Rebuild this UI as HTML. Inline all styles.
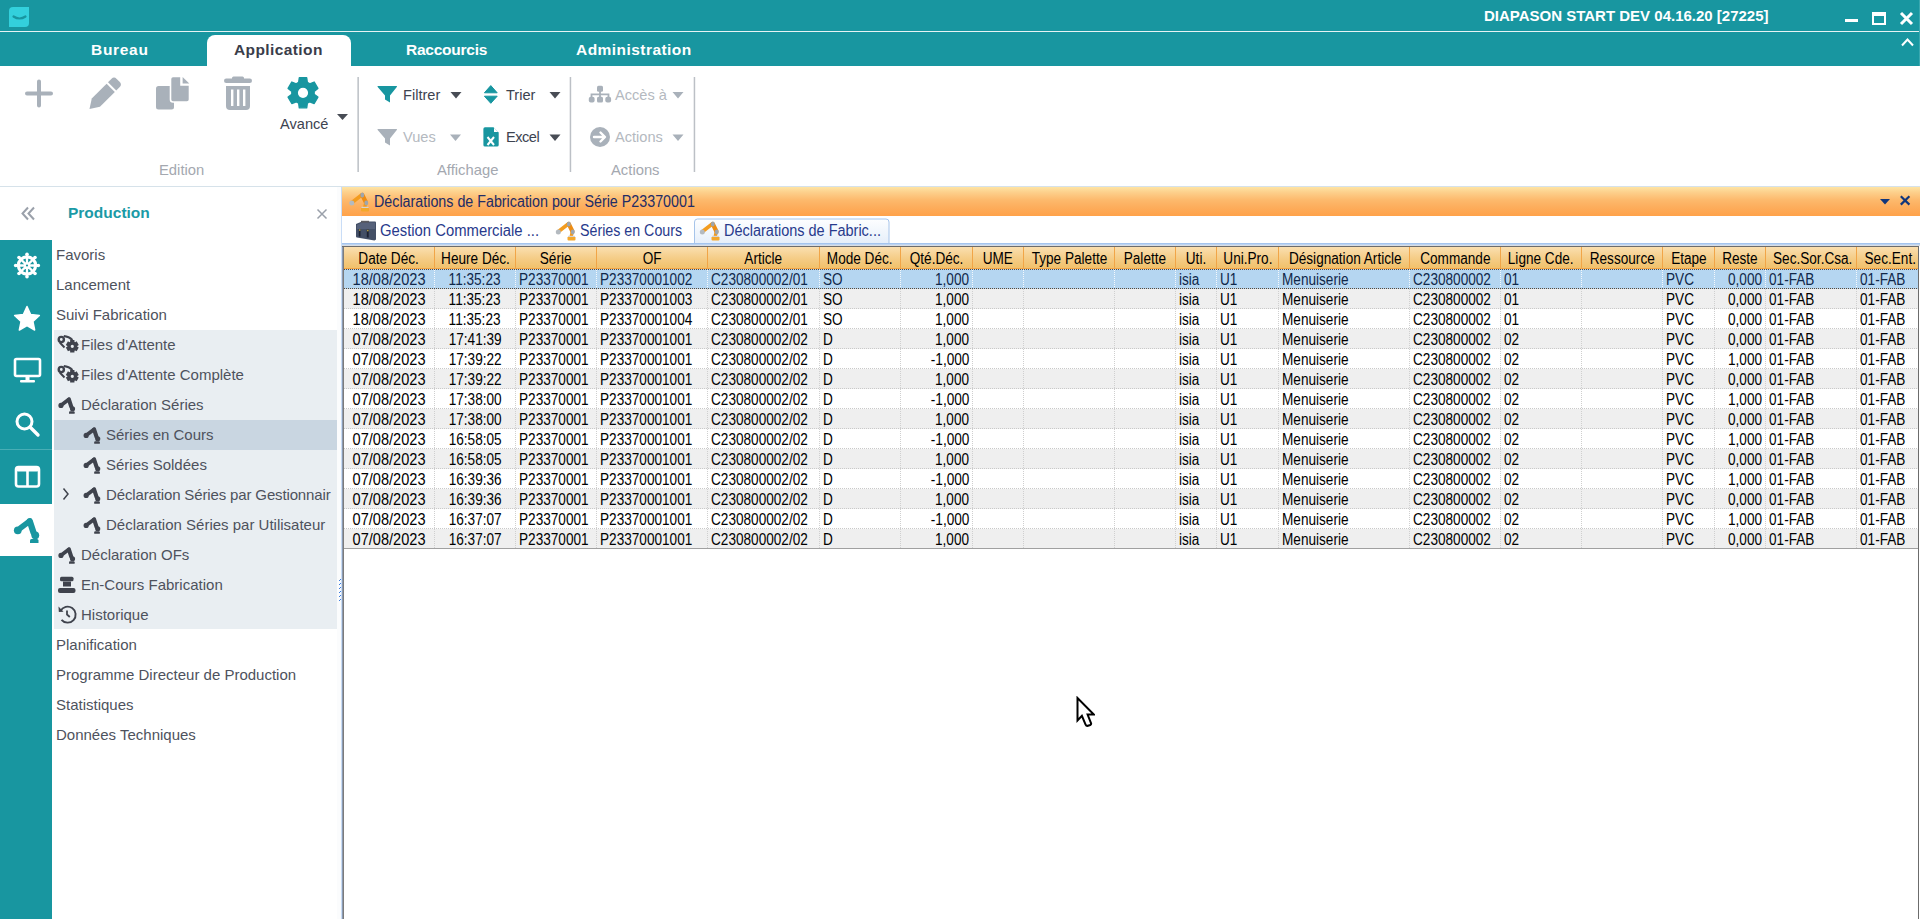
<!DOCTYPE html><html><head><meta charset="utf-8"><style>
*{box-sizing:border-box;margin:0;padding:0}
html,body{width:1920px;height:919px;overflow:hidden;background:#fff;font-family:"Liberation Sans",sans-serif;position:relative}
.a{position:absolute}
.t{position:absolute;white-space:nowrap;line-height:1}
.rtab{position:absolute;top:42px;font-weight:bold;font-size:15.5px;color:#fff;white-space:nowrap;line-height:1}
.glabel{position:absolute;top:163px;font-size:14.8px;color:#a4a8b0;white-space:nowrap;line-height:1}
.rsep{position:absolute;top:77px;width:2px;height:95px;background:#c8ccd0}
.rt{position:absolute;font-size:14.6px;color:#3d4350;white-space:nowrap;line-height:1}
.rt.dis{color:#b4b9c0}
.tr{position:absolute;font-size:15px;color:#4e525d;white-space:nowrap;line-height:1}
.grid{position:absolute;left:343px;top:246px;width:1576px;height:303px}
.hc{position:absolute;top:0;height:23px;font-size:14px;color:#000;text-align:center;line-height:23px;white-space:nowrap}
.c{position:absolute;font-size:16px;white-space:nowrap;line-height:20px;height:20px}
</style></head><body>
<div class="a" style="left:0;top:0;width:1920px;height:66px;background:#1896a0"></div>
<div class="a" style="left:0;top:31px;width:1920px;height:1px;background:#e6f3f4"></div>
<div class="a" style="left:1919px;top:0;width:1px;height:66px;background:#3aa8b0"></div>
<svg class="a" style="left:0;top:0" width="40" height="31" viewBox="0 0 40 31"><path d="M13,7 H29 V23 Q29,27 25,27 H9 V11 Q9,7 13,7Z" fill="#33d0dc"/><path d="M13.5,16.5 Q19.5,20.5 25.5,16.5" stroke="#1896a0" stroke-width="2.2" fill="none" stroke-linecap="round"/></svg>
<div class="t" style="left:1484px;top:8px;font-size:15px;font-weight:bold;color:#fff">DIAPASON START DEV 04.16.20 [27225]</div>
<svg class="a" style="left:1840px;top:8px" width="80" height="45" viewBox="1840 8 80 45"><rect x="1845" y="19" width="13" height="3" fill="#fff"/><rect x="1873" y="13" width="12" height="11" fill="none" stroke="#fff" stroke-width="2"/><rect x="1872" y="12" width="14" height="4" fill="#fff"/><path d="M1901,13 L1912,24 M1912,13 L1901,24" stroke="#fff" stroke-width="3"/><path d="M1902,45.5 L1907.5,39.5 L1913,45.5" stroke="#fff" stroke-width="2" fill="none"/></svg>
<div class="a" style="left:207px;top:35px;width:144px;height:31px;background:#fff;border-radius:8px 8px 0 0"></div>
<div class="rtab" style="left:91px;letter-spacing:0.7px">Bureau</div>
<div class="rtab" style="left:234px;color:#3a3d4a;letter-spacing:0.4px">Application</div>
<div class="rtab" style="left:406px;letter-spacing:-0.25px">Raccourcis</div>
<div class="rtab" style="left:576px;letter-spacing:0.45px">Administration</div>
<div class="a" style="left:0;top:186px;width:1920px;height:1px;background:#d6e2ea"></div>
<svg class="a" style="left:0;top:66px" width="720" height="120" viewBox="0 66 720 120"><path d="M27,93.5 H51 M39,81.5 V105.5" stroke="#a9b1ba" stroke-width="4" stroke-linecap="round"/><g transform="translate(89.5,109) rotate(-45)"><path d="M0,0 L9,-5.8 H30 V5.8 H9 Z" fill="#a9b1ba"/><path d="M32,-5.8 H37 Q40.5,-5.8 40.5,-2 V2 Q40.5,5.8 37,5.8 H32Z" fill="#a9b1ba"/></g><rect x="156" y="86" width="18" height="23.5" rx="2.5" fill="#a9b1ba"/><path d="M173,76.5 H181 V85 H189.5 V99.5 Q189.5,102 187,102 H173 Q170.5,102 170.5,99.5 V79 Q170.5,76.5 173,76.5Z" fill="#a9b1ba" stroke="#fff" stroke-width="1.6"/><path d="M182.6,77 L189.3,83.5 H182.6Z" fill="#a9b1ba"/><rect x="224" y="78.5" width="28" height="4.5" rx="2.2" fill="#a9b1ba"/><rect x="232" y="76.5" width="12" height="4" rx="1.5" fill="#a9b1ba"/><path d="M226,86 H250 V106 Q250,110 246,110 H230 Q226,110 226,106Z" fill="#a9b1ba"/><rect x="231" y="89.5" width="2.4" height="16.5" fill="#fff"/><rect x="237" y="89.5" width="2.4" height="16.5" fill="#fff"/><rect x="243" y="89.5" width="2.4" height="16.5" fill="#fff"/><path d="M298.64,82.48 L299.32,77.74 L306.68,77.74 L307.36,82.48 A11.20,11.20 0 0 1 309.75,83.86 L314.20,82.08 L317.88,88.46 L314.11,91.42 A11.20,11.20 0 0 1 314.11,94.18 L317.88,97.14 L314.20,103.52 L309.75,101.74 A11.20,11.20 0 0 1 307.36,103.12 L306.68,107.86 L299.32,107.86 L298.64,103.12 A11.20,11.20 0 0 1 296.25,101.74 L291.80,103.52 L288.12,97.14 L291.89,94.18 A11.20,11.20 0 0 1 291.89,91.42 L288.12,88.46 L291.80,82.08 L296.25,83.86 A11.20,11.20 0 0 1 298.64,82.48Z M297.20,92.80 a5.80,5.80 0 1 0 11.60,0 a5.80,5.80 0 1 0 -11.60,0Z" fill="#1896a0" fill-rule="evenodd" stroke="#1896a0" stroke-width="1.4" stroke-linejoin="round"/><path d="M337,114 H348 L342.5,120Z" fill="#484c55"/><rect x="357.4" y="77" width="1.5" height="95" fill="#bcc0c6"/><rect x="569.7" y="77" width="1.5" height="95" fill="#bcc0c6"/><rect x="693.7" y="77" width="1.5" height="95" fill="#bcc0c6"/><path d="M378,86 H396.5 Q397.5,86 396.8,87 L390,95.5 V102.5 L385,99.5 V95.5 L377.7,87 Q377,86 378,86Z" fill="#1896a0"/><path d="M378,129 H396.5 Q397.5,129 396.8,130 L390,138.5 V145.5 L385,142.5 V138.5 L377.7,130 Q377,129 378,129Z" fill="#a9b1ba"/><path d="M450.5,92 H461.5 L456,98.5Z" fill="#484c55"/><path d="M450,134.5 H461 L455.5,141Z" fill="#a9b1ba"/><path d="M490.8,85.6 L497.2,92.8 H484.4Z M490.8,103.3 L497.2,96.2 H484.4Z" fill="#1896a0" stroke="#1896a0" stroke-width="1" stroke-linejoin="round"/><path d="M549.5,92 H560.5 L555,98.5Z" fill="#484c55"/><path d="M549.5,134.5 H560.5 L555,141Z" fill="#484c55"/><path d="M485,127.3 H493.5 L498.7,132.5 V145 Q498.7,146.6 497,146.6 H485 Q483.4,146.6 483.4,145 V129 Q483.4,127.3 485,127.3Z" fill="#1896a0"/><path d="M494,127.8 L498.2,132 H494Z" fill="#fff"/><path d="M487.5,137 L494,145 M494,137 L487.5,145" stroke="#fff" stroke-width="2"/><rect x="597" y="85.8" width="6" height="6" rx="1.5" fill="#a9b1ba"/><path d="M600,91 V97 M591.5,97 V94.3 H608.5 V97" stroke="#a9b1ba" stroke-width="1.8" fill="none"/><rect x="588.8" y="96.8" width="5.8" height="5.8" rx="2" fill="#a9b1ba"/><rect x="597" y="96.8" width="6" height="5.8" rx="1.5" fill="#a9b1ba"/><rect x="605.3" y="96.8" width="5.8" height="5.8" rx="2" fill="#a9b1ba"/><path d="M672.5,92 H683.5 L678,98.5Z M672.5,134.5 H683.5 L678,141Z" fill="#a9b1ba"/><circle cx="600" cy="137" r="10" fill="#a9b1ba"/><path d="M594,137 H604.5 M600.5,132.5 L605,137 L600.5,141.5" stroke="#fff" stroke-width="2.4" fill="none" stroke-linecap="round" stroke-linejoin="round"/></svg>
<div class="rt" style="left:280px;top:117px">Avancé</div>
<div class="rt" style="left:403px;top:88px">Filtrer</div>
<div class="rt dis" style="left:403px;top:130px">Vues</div>
<div class="rt" style="left:506px;top:88px">Trier</div>
<div class="rt" style="left:506px;top:130px;letter-spacing:-0.5px">Excel</div>
<div class="rt dis" style="left:615px;top:88px">Accès à</div>
<div class="rt dis" style="left:615px;top:130px">Actions</div>
<div class="glabel" style="left:159px">Edition</div>
<div class="glabel" style="left:437px">Affichage</div>
<div class="glabel" style="left:611px">Actions</div>
<div class="a" style="left:0;top:240px;width:52px;height:679px;background:#1896a0"></div>
<div class="a" style="left:0;top:449px;width:52px;height:1px;background:#48aeb5"></div>
<div class="a" style="left:0;top:504px;width:52px;height:52px;background:#fff"></div>
<svg class="a" style="left:0;top:186px" width="52" height="400" viewBox="0 186 52 400"><path d="M28,207.5 L22.5,213.5 L28,219.5 M34,207.5 L28.5,213.5 L34,219.5" stroke="#9aa0aa" stroke-width="2" fill="none"/><circle cx="27" cy="265.5" r="8.6" stroke="#fff" stroke-width="3.2" fill="none"/><circle cx="27" cy="265.5" r="3" fill="#fff"/><path d="M27.00,263.50 L27.00,254.20 M28.41,264.09 L34.99,257.51 M29.00,265.50 L38.30,265.50 M28.41,266.91 L34.99,273.49 M27.00,267.50 L27.00,276.80 M25.59,266.91 L19.01,273.49 M25.00,265.50 L15.70,265.50 M25.59,264.09 L19.01,257.51 " stroke="#fff" stroke-width="2.3" stroke-linecap="round"/><circle cx="27.00" cy="254.20" r="1.8" fill="#fff"/><circle cx="34.99" cy="257.51" r="1.8" fill="#fff"/><circle cx="38.30" cy="265.50" r="1.8" fill="#fff"/><circle cx="34.99" cy="273.49" r="1.8" fill="#fff"/><circle cx="27.00" cy="276.80" r="1.8" fill="#fff"/><circle cx="19.01" cy="273.49" r="1.8" fill="#fff"/><circle cx="15.70" cy="265.50" r="1.8" fill="#fff"/><circle cx="19.01" cy="257.51" r="1.8" fill="#fff"/><circle cx="27" cy="265.5" r="1.1" fill="#1896a0"/><path d="M27.00,306.50 L30.64,314.48 L39.36,315.48 L32.90,321.42 L34.64,330.02 L27.00,325.70 L19.36,330.02 L21.10,321.42 L14.64,315.48 L23.36,314.48Z" fill="#fff" stroke="#fff" stroke-width="1.5" stroke-linejoin="round"/><rect x="15" y="359" width="25" height="17" rx="1.5" stroke="#fff" stroke-width="2.6" fill="none"/><rect x="25.5" y="376" width="4" height="4" fill="#fff"/><rect x="20" y="380" width="15" height="2.5" rx="1" fill="#fff"/><circle cx="24.5" cy="421.5" r="7.5" stroke="#fff" stroke-width="3" fill="none"/><path d="M30,427 L38,435" stroke="#fff" stroke-width="3.4" stroke-linecap="round"/><rect x="16" y="467" width="23" height="19.5" rx="2.5" stroke="#fff" stroke-width="2.6" fill="none"/><rect x="16" y="467" width="23" height="4.5" rx="2" fill="#fff"/><rect x="26.2" y="469" width="2.6" height="17" fill="#fff"/></svg>
<svg class="a" style="left:0;top:504px" width="52" height="52" viewBox="0 504 52 52"><g transform="translate(13.00,516.00) scale(1.000)" fill="#1896a0"><circle cx="4.8" cy="14.3" r="3.9"/><path d="M7.5,12 L16.5,5.2" stroke="#1896a0" stroke-width="5.6" stroke-linecap="round"/><path d="M16.8,5.2 L20.5,16.5" stroke="#1896a0" stroke-width="6.2" stroke-linecap="round"/><circle cx="22.3" cy="19.3" r="3.9"/><path d="M17,27 V24.5 Q17,23 18.5,23 H24 Q25.5,23 25.5,24.5 V27Z"/></g></svg>
<div class="t" style="left:68px;top:205px;font-size:15.5px;font-weight:bold;color:#1a9aa6">Production</div>
<svg class="a" style="left:316px;top:208px" width="12" height="12"><path d="M1.5,1.5 L10.5,10.5 M10.5,1.5 L1.5,10.5" stroke="#9aa0aa" stroke-width="1.5"/></svg>
<div class="a" style="left:54px;top:330px;width:283px;height:299px;background:#e9eef2"></div>
<div class="a" style="left:54px;top:420px;width:283px;height:30px;background:#c9d6e1"></div>
<div class="tr" style="left:56px;top:247px">Favoris</div>
<div class="tr" style="left:56px;top:277px">Lancement</div>
<div class="tr" style="left:56px;top:307px">Suivi Fabrication</div>
<div class="tr" style="left:81px;top:337px">Files d'Attente</div>
<div class="tr" style="left:81px;top:367px">Files d'Attente Complète</div>
<div class="tr" style="left:81px;top:397px">Déclaration Séries</div>
<div class="tr" style="left:106px;top:427px">Séries en Cours</div>
<div class="tr" style="left:106px;top:457px">Séries Soldées</div>
<div class="tr" style="left:106px;top:487px;letter-spacing:-0.14px">Déclaration Séries par Gestionnair</div>
<div class="tr" style="left:106px;top:517px">Déclaration Séries par Utilisateur</div>
<div class="tr" style="left:81px;top:547px">Déclaration OFs</div>
<div class="tr" style="left:81px;top:577px">En-Cours Fabrication</div>
<div class="tr" style="left:81px;top:607px">Historique</div>
<div class="tr" style="left:56px;top:637px">Planification</div>
<div class="tr" style="left:56px;top:667px">Programme Directeur de Production</div>
<div class="tr" style="left:56px;top:697px">Statistiques</div>
<div class="tr" style="left:56px;top:727px">Données Techniques</div>
<svg class="a" style="left:52px;top:240px" width="290" height="520" viewBox="52 240 290 520"><circle cx="61.3" cy="339.5" r="2.6" stroke="#3f434d" stroke-width="2.4" fill="none"/><path d="M63.8,336.0 Q69,336.5 72.5,340.0 M59.8,342.5 L64.5,347.5" stroke="#3f434d" stroke-width="1.9" fill="none"/><path d="M70.13,341.80 L70.16,340.06 L74.44,340.06 L74.47,341.80 A5.00,5.00 0 0 1 75.11,342.17 L76.64,341.33 L78.78,345.03 L77.29,345.93 A5.00,5.00 0 0 1 77.29,346.67 L78.78,347.57 L76.64,351.27 L75.11,350.43 A5.00,5.00 0 0 1 74.47,350.80 L74.44,352.54 L70.16,352.54 L70.13,350.80 A5.00,5.00 0 0 1 69.49,350.43 L67.96,351.27 L65.82,347.57 L67.31,346.67 A5.00,5.00 0 0 1 67.31,345.93 L65.82,345.03 L67.96,341.33 L69.49,342.17 A5.00,5.00 0 0 1 70.13,341.80Z M70.70,346.30 a1.60,1.60 0 1 0 3.20,0 a1.60,1.60 0 1 0 -3.20,0Z" fill="#3f434d" fill-rule="evenodd"/><circle cx="61.3" cy="369.5" r="2.6" stroke="#3f434d" stroke-width="2.4" fill="none"/><path d="M63.8,366.0 Q69,366.5 72.5,370.0 M59.8,372.5 L64.5,377.5" stroke="#3f434d" stroke-width="1.9" fill="none"/><path d="M70.13,371.80 L70.16,370.06 L74.44,370.06 L74.47,371.80 A5.00,5.00 0 0 1 75.11,372.17 L76.64,371.33 L78.78,375.03 L77.29,375.93 A5.00,5.00 0 0 1 77.29,376.67 L78.78,377.57 L76.64,381.27 L75.11,380.43 A5.00,5.00 0 0 1 74.47,380.80 L74.44,382.54 L70.16,382.54 L70.13,380.80 A5.00,5.00 0 0 1 69.49,380.43 L67.96,381.27 L65.82,377.57 L67.31,376.67 A5.00,5.00 0 0 1 67.31,375.93 L65.82,375.03 L67.96,371.33 L69.49,372.17 A5.00,5.00 0 0 1 70.13,371.80Z M70.70,376.30 a1.60,1.60 0 1 0 3.20,0 a1.60,1.60 0 1 0 -3.20,0Z" fill="#3f434d" fill-rule="evenodd"/><g transform="translate(57.80,396.00) scale(0.660)" fill="#3f434d"><circle cx="4.8" cy="14.3" r="3.9"/><path d="M7.5,12 L16.5,5.2" stroke="#3f434d" stroke-width="5.6" stroke-linecap="round"/><path d="M16.8,5.2 L20.5,16.5" stroke="#3f434d" stroke-width="6.2" stroke-linecap="round"/><circle cx="22.3" cy="19.3" r="3.9"/><path d="M17,27 V24.5 Q17,23 18.5,23 H24 Q25.5,23 25.5,24.5 V27Z"/></g><g transform="translate(83.00,426.00) scale(0.660)" fill="#3f434d"><circle cx="4.8" cy="14.3" r="3.9"/><path d="M7.5,12 L16.5,5.2" stroke="#3f434d" stroke-width="5.6" stroke-linecap="round"/><path d="M16.8,5.2 L20.5,16.5" stroke="#3f434d" stroke-width="6.2" stroke-linecap="round"/><circle cx="22.3" cy="19.3" r="3.9"/><path d="M17,27 V24.5 Q17,23 18.5,23 H24 Q25.5,23 25.5,24.5 V27Z"/></g><g transform="translate(83.00,456.00) scale(0.660)" fill="#3f434d"><circle cx="4.8" cy="14.3" r="3.9"/><path d="M7.5,12 L16.5,5.2" stroke="#3f434d" stroke-width="5.6" stroke-linecap="round"/><path d="M16.8,5.2 L20.5,16.5" stroke="#3f434d" stroke-width="6.2" stroke-linecap="round"/><circle cx="22.3" cy="19.3" r="3.9"/><path d="M17,27 V24.5 Q17,23 18.5,23 H24 Q25.5,23 25.5,24.5 V27Z"/></g><g transform="translate(83.00,486.00) scale(0.660)" fill="#3f434d"><circle cx="4.8" cy="14.3" r="3.9"/><path d="M7.5,12 L16.5,5.2" stroke="#3f434d" stroke-width="5.6" stroke-linecap="round"/><path d="M16.8,5.2 L20.5,16.5" stroke="#3f434d" stroke-width="6.2" stroke-linecap="round"/><circle cx="22.3" cy="19.3" r="3.9"/><path d="M17,27 V24.5 Q17,23 18.5,23 H24 Q25.5,23 25.5,24.5 V27Z"/></g><g transform="translate(83.00,516.00) scale(0.660)" fill="#3f434d"><circle cx="4.8" cy="14.3" r="3.9"/><path d="M7.5,12 L16.5,5.2" stroke="#3f434d" stroke-width="5.6" stroke-linecap="round"/><path d="M16.8,5.2 L20.5,16.5" stroke="#3f434d" stroke-width="6.2" stroke-linecap="round"/><circle cx="22.3" cy="19.3" r="3.9"/><path d="M17,27 V24.5 Q17,23 18.5,23 H24 Q25.5,23 25.5,24.5 V27Z"/></g><g transform="translate(57.80,546.00) scale(0.660)" fill="#3f434d"><circle cx="4.8" cy="14.3" r="3.9"/><path d="M7.5,12 L16.5,5.2" stroke="#3f434d" stroke-width="5.6" stroke-linecap="round"/><path d="M16.8,5.2 L20.5,16.5" stroke="#3f434d" stroke-width="6.2" stroke-linecap="round"/><circle cx="22.3" cy="19.3" r="3.9"/><path d="M17,27 V24.5 Q17,23 18.5,23 H24 Q25.5,23 25.5,24.5 V27Z"/></g><rect x="60" y="576.7" width="13.5" height="4.5" rx="1.5" fill="#3f434d"/><rect x="63" y="581.5" width="8" height="5" fill="#3f434d"/><rect x="58" y="588.0" width="17.5" height="5" rx="2" fill="#3f434d"/><path d="M60.5,611.0 A8,8 0 1 1 61.5,619.8" stroke="#3f434d" stroke-width="1.9" fill="none"/><path d="M58.5,606.5 L63.5,611.8 L58.8,612.0 Z" fill="#3f434d"/><path d="M67,610.5 V614.5 L69.8,617.0" stroke="#3f434d" stroke-width="1.8" fill="none"/><path d="M63.5,488.5 L68,494 L63.5,499.5" stroke="#3f434d" stroke-width="1.5" fill="none"/></svg>
<div class="a" style="left:337px;top:187px;width:4px;height:732px;background:#fbfcfd"></div>
<svg class="a" style="left:336px;top:576px" width="8" height="30"><path d="M5,3 L3,5 M5,7 L3,9 M5,11 L3,13 M5,15 L3,17 M5,19 L3,21 M5,23 L3,25" stroke="#3c7de0" stroke-width="1"/></svg>
<div class="a" style="left:341px;top:187px;width:1px;height:732px;background:#c9ddf7"></div>
<div class="a" style="left:342px;top:187px;width:1578px;height:29px;background:linear-gradient(#fee4a4 0%,#fdd08c 18%,#fdb96c 45%,#fdad5c 70%,#ffa24a 100%)"></div>
<div class="t" style="left:374px;top:194px;font-size:16px;color:#222c66;transform:scaleX(0.893);transform-origin:0 50%">Déclarations de Fabrication pour Série P23370001</div>
<svg class="a" style="left:1870px;top:192px" width="45" height="20" viewBox="1870 192 45 20"><path d="M1880,199 H1890 L1885,204.6Z" fill="#10367c"/><path d="M1900.8,196.2 L1909.4,204.6 M1909.4,196.2 L1900.8,204.6" stroke="#10367c" stroke-width="2.2"/></svg>
<svg class="a" style="left:342px;top:187px" width="560" height="60" viewBox="342 187 560 60"><g transform="translate(349.50,192.00) scale(1.000)"><path d="M2.5,10.5 L12.5,2.8" stroke="#f39c1f" stroke-width="3.6" stroke-linecap="round"/><path d="M12.8,3 L16.5,10.5" stroke="#ee8c12" stroke-width="4.2" stroke-linecap="round"/><path d="M16.2,11 L15.2,15.5" stroke="#f09a20" stroke-width="3.4"/><ellipse cx="12.8" cy="3" rx="1.9" ry="2.6" fill="#9ea6ae"/><ellipse cx="16.8" cy="11" rx="1.9" ry="2.4" fill="#9ea6ae"/><circle cx="2.3" cy="11" r="2.5" fill="#b4bac0"/><path d="M11.5,16 H19.5 V18.5 Q19.5,19.5 18.5,19.5 H12.5 Q11.5,19.5 11.5,18.5Z" fill="#f4a82c"/><path d="M12,15.4 H19" stroke="#d4d4d4" stroke-width="1.2"/></g><path d="M356,224 L362,221.5 H375 Q376,221.5 376,222.5 V239.5 L374.5,240.5 L357,237.5 Q356,237.3 356,236.5Z" fill="#434f66"/><path d="M357,225 L362,222.5 H375 V229 H357Z" fill="#56617a"/><rect x="361" y="220.8" width="8" height="1.8" fill="#5a5a60"/><rect x="358.8" y="229" width="1.7" height="7.5" fill="#1c2232"/><rect x="366.8" y="229.5" width="1.9" height="8" fill="#1c2232"/><rect x="359" y="229.3" width="1.5" height="1.5" fill="#b09a40"/><rect x="367" y="229.8" width="1.6" height="1.5" fill="#b09a40"/><g transform="translate(556.00,221.00) scale(1.000)"><path d="M2.5,10.5 L12.5,2.8" stroke="#f39c1f" stroke-width="3.6" stroke-linecap="round"/><path d="M12.8,3 L16.5,10.5" stroke="#ee8c12" stroke-width="4.2" stroke-linecap="round"/><path d="M16.2,11 L15.2,15.5" stroke="#f09a20" stroke-width="3.4"/><ellipse cx="12.8" cy="3" rx="1.9" ry="2.6" fill="#9ea6ae"/><ellipse cx="16.8" cy="11" rx="1.9" ry="2.4" fill="#9ea6ae"/><circle cx="2.3" cy="11" r="2.5" fill="#b4bac0"/><path d="M11.5,16 H19.5 V18.5 Q19.5,19.5 18.5,19.5 H12.5 Q11.5,19.5 11.5,18.5Z" fill="#f4a82c"/><path d="M12,15.4 H19" stroke="#d4d4d4" stroke-width="1.2"/></g><path d="M694.5,243 V222 Q694.5,219 697.5,219 H886 Q889,219 889,222 V243" fill="url(#tabg)" stroke="#a6c4ea" stroke-width="1"/><defs><linearGradient id="tabg" x1="0" y1="0" x2="0" y2="1"><stop offset="0" stop-color="#fdfeff"/><stop offset="1" stop-color="#e6effa"/></linearGradient></defs><g transform="translate(700.00,221.00) scale(1.000)"><path d="M2.5,10.5 L12.5,2.8" stroke="#f39c1f" stroke-width="3.6" stroke-linecap="round"/><path d="M12.8,3 L16.5,10.5" stroke="#ee8c12" stroke-width="4.2" stroke-linecap="round"/><path d="M16.2,11 L15.2,15.5" stroke="#f09a20" stroke-width="3.4"/><ellipse cx="12.8" cy="3" rx="1.9" ry="2.6" fill="#9ea6ae"/><ellipse cx="16.8" cy="11" rx="1.9" ry="2.4" fill="#9ea6ae"/><circle cx="2.3" cy="11" r="2.5" fill="#b4bac0"/><path d="M11.5,16 H19.5 V18.5 Q19.5,19.5 18.5,19.5 H12.5 Q11.5,19.5 11.5,18.5Z" fill="#f4a82c"/><path d="M12,15.4 H19" stroke="#d4d4d4" stroke-width="1.2"/></g></svg>
<div class="t" style="left:380px;top:223px;font-size:16px;color:#283a8c;transform:scaleX(0.927);transform-origin:0 50%">Gestion Commerciale ...</div>
<div class="t" style="left:580px;top:223px;font-size:16px;color:#283a8c;transform:scaleX(0.89);transform-origin:0 50%">Séries en Cours</div>
<div class="t" style="left:724px;top:223px;font-size:16px;color:#283a8c;transform:scaleX(0.905);transform-origin:0 50%">Déclarations de Fabric...</div>
<div class="a" style="left:342px;top:243px;width:1578px;height:1px;background:#a4c4ee"></div><div class="a" style="left:342px;top:244px;width:1578px;height:1px;background:#bcd4f2"></div><div class="a" style="left:342px;top:245px;width:1578px;height:1px;background:#d8dde4"></div>
<div class="a" style="left:1918px;top:246px;width:1px;height:673px;background:#6c6c6c"></div>
<div class="a" style="left:342px;top:246px;width:1577px;height:1px;background:#6c6c6c"></div><div class="a" style="left:342px;top:247px;width:1px;height:672px;background:#8c9ab0"></div><div class="a" style="left:343px;top:247px;width:1px;height:672px;background:#7c7c7c"></div>
<div class="a" style="left:344px;top:247px;width:1574px;height:22px;background:linear-gradient(#fadfb0,#f5cd88 50%,#f1c068)"></div>
<div class="a" style="left:344px;top:268px;width:1574px;height:1px;background:#f3a545"></div>
<div class="a" style="left:434px;top:247px;width:1px;height:22px;background:#f1a547"></div>
<div class="a" style="left:515px;top:247px;width:1px;height:22px;background:#f1a547"></div>
<div class="a" style="left:596px;top:247px;width:1px;height:22px;background:#f1a547"></div>
<div class="a" style="left:707px;top:247px;width:1px;height:22px;background:#f1a547"></div>
<div class="a" style="left:819px;top:247px;width:1px;height:22px;background:#f1a547"></div>
<div class="a" style="left:900px;top:247px;width:1px;height:22px;background:#f1a547"></div>
<div class="a" style="left:972px;top:247px;width:1px;height:22px;background:#f1a547"></div>
<div class="a" style="left:1023px;top:247px;width:1px;height:22px;background:#f1a547"></div>
<div class="a" style="left:1114px;top:247px;width:1px;height:22px;background:#f1a547"></div>
<div class="a" style="left:1175px;top:247px;width:1px;height:22px;background:#f1a547"></div>
<div class="a" style="left:1216px;top:247px;width:1px;height:22px;background:#f1a547"></div>
<div class="a" style="left:1278px;top:247px;width:1px;height:22px;background:#f1a547"></div>
<div class="a" style="left:1409px;top:247px;width:1px;height:22px;background:#f1a547"></div>
<div class="a" style="left:1500px;top:247px;width:1px;height:22px;background:#f1a547"></div>
<div class="a" style="left:1581px;top:247px;width:1px;height:22px;background:#f1a547"></div>
<div class="a" style="left:1662px;top:247px;width:1px;height:22px;background:#f1a547"></div>
<div class="a" style="left:1714px;top:247px;width:1px;height:22px;background:#f1a547"></div>
<div class="a" style="left:1765px;top:247px;width:1px;height:22px;background:#f1a547"></div>
<div class="a" style="left:1856px;top:247px;width:1px;height:22px;background:#f1a547"></div>
<div class="t" style="left:344px;top:251px;width:90px;text-align:center;font-size:16px;color:#000"><span style="display:inline-block;transform:scaleX(0.85);transform-origin:50% 50%">Date Déc.</span></div>
<div class="t" style="left:435px;top:251px;width:80px;text-align:center;font-size:16px;color:#000"><span style="display:inline-block;transform:scaleX(0.85);transform-origin:50% 50%">Heure Déc.</span></div>
<div class="t" style="left:516px;top:251px;width:80px;text-align:center;font-size:16px;color:#000"><span style="display:inline-block;transform:scaleX(0.85);transform-origin:50% 50%">Série</span></div>
<div class="t" style="left:597px;top:251px;width:110px;text-align:center;font-size:16px;color:#000"><span style="display:inline-block;transform:scaleX(0.85);transform-origin:50% 50%">OF</span></div>
<div class="t" style="left:708px;top:251px;width:111px;text-align:center;font-size:16px;color:#000"><span style="display:inline-block;transform:scaleX(0.85);transform-origin:50% 50%">Article</span></div>
<div class="t" style="left:820px;top:251px;width:80px;text-align:center;font-size:16px;color:#000"><span style="display:inline-block;transform:scaleX(0.85);transform-origin:50% 50%">Mode Déc.</span></div>
<div class="t" style="left:901px;top:251px;width:71px;text-align:center;font-size:16px;color:#000"><span style="display:inline-block;transform:scaleX(0.85);transform-origin:50% 50%">Qté.Déc.</span></div>
<div class="t" style="left:973px;top:251px;width:50px;text-align:center;font-size:16px;color:#000"><span style="display:inline-block;transform:scaleX(0.85);transform-origin:50% 50%">UME</span></div>
<div class="t" style="left:1024px;top:251px;width:90px;text-align:center;font-size:16px;color:#000"><span style="display:inline-block;transform:scaleX(0.85);transform-origin:50% 50%">Type Palette</span></div>
<div class="t" style="left:1115px;top:251px;width:60px;text-align:center;font-size:16px;color:#000"><span style="display:inline-block;transform:scaleX(0.85);transform-origin:50% 50%">Palette</span></div>
<div class="t" style="left:1176px;top:251px;width:40px;text-align:center;font-size:16px;color:#000"><span style="display:inline-block;transform:scaleX(0.85);transform-origin:50% 50%">Uti.</span></div>
<div class="t" style="left:1217px;top:251px;width:61px;text-align:center;font-size:16px;color:#000"><span style="display:inline-block;transform:scaleX(0.85);transform-origin:50% 50%">Uni.Pro.</span></div>
<div class="t" style="left:1279px;top:251px;width:130px;text-align:center;font-size:16px;color:#000"><span style="display:inline-block;transform:scaleX(0.85);transform-origin:50% 50%">Désignation Article</span></div>
<div class="t" style="left:1410px;top:251px;width:90px;text-align:center;font-size:16px;color:#000"><span style="display:inline-block;transform:scaleX(0.85);transform-origin:50% 50%">Commande</span></div>
<div class="t" style="left:1501px;top:251px;width:80px;text-align:center;font-size:16px;color:#000"><span style="display:inline-block;transform:scaleX(0.85);transform-origin:50% 50%">Ligne Cde.</span></div>
<div class="t" style="left:1582px;top:251px;width:80px;text-align:center;font-size:16px;color:#000"><span style="display:inline-block;transform:scaleX(0.85);transform-origin:50% 50%">Ressource</span></div>
<div class="t" style="left:1663px;top:251px;width:51px;text-align:center;font-size:16px;color:#000"><span style="display:inline-block;transform:scaleX(0.85);transform-origin:50% 50%">Etape</span></div>
<div class="t" style="left:1715px;top:251px;width:50px;text-align:center;font-size:16px;color:#000"><span style="display:inline-block;transform:scaleX(0.85);transform-origin:50% 50%">Reste</span></div>
<div class="t" style="left:1766px;top:251px;width:90px;text-align:center;font-size:16px;color:#000"><span style="display:inline-block;transform:scaleX(0.85);transform-origin:50% 50%">Sec.Sor.Csa.</span></div>
<div class="t" style="left:1860px;top:251px;width:61px;text-align:center;font-size:16px;color:#000"><span style="display:inline-block;transform:scaleX(0.85);transform-origin:50% 50%">Sec.Ent.</span></div>
<div class="a" style="left:344px;top:269px;width:1574px;height:20px;background:#b5d6f1"></div>
<div class="c" style="top:270px;left:344px;width:90px;text-align:center;color:#10284a"><span style="display:inline-block;transform:scaleX(0.91);transform-origin:50% 50%">18/08/2023</span></div>
<div class="c" style="top:270px;left:435px;width:80px;text-align:center;color:#10284a"><span style="display:inline-block;transform:scaleX(0.85);transform-origin:50% 50%">11:35:23</span></div>
<div class="c" style="top:270px;left:519px;color:#10284a"><span style="display:inline-block;transform:scaleX(0.85);transform-origin:0 50%">P23370001</span></div>
<div class="c" style="top:270px;left:600px;color:#10284a"><span style="display:inline-block;transform:scaleX(0.85);transform-origin:0 50%">P23370001002</span></div>
<div class="c" style="top:270px;left:711px;color:#10284a"><span style="display:inline-block;transform:scaleX(0.85);transform-origin:0 50%">C230800002/01</span></div>
<div class="c" style="top:270px;left:823px;color:#10284a"><span style="display:inline-block;transform:scaleX(0.85);transform-origin:0 50%">SO</span></div>
<div class="c" style="top:270px;left:901px;width:68px;text-align:right;color:#10284a"><span style="display:inline-block;transform:scaleX(0.85);transform-origin:100% 50%">1,000</span></div>
<div class="c" style="top:270px;left:1179px;color:#10284a"><span style="display:inline-block;transform:scaleX(0.85);transform-origin:0 50%">isia</span></div>
<div class="c" style="top:270px;left:1220px;color:#10284a"><span style="display:inline-block;transform:scaleX(0.85);transform-origin:0 50%">U1</span></div>
<div class="c" style="top:270px;left:1282px;color:#10284a"><span style="display:inline-block;transform:scaleX(0.85);transform-origin:0 50%">Menuiserie</span></div>
<div class="c" style="top:270px;left:1413px;color:#10284a"><span style="display:inline-block;transform:scaleX(0.85);transform-origin:0 50%">C230800002</span></div>
<div class="c" style="top:270px;left:1504px;color:#10284a"><span style="display:inline-block;transform:scaleX(0.85);transform-origin:0 50%">01</span></div>
<div class="c" style="top:270px;left:1666px;color:#10284a"><span style="display:inline-block;transform:scaleX(0.85);transform-origin:0 50%">PVC</span></div>
<div class="c" style="top:270px;left:1715px;width:47px;text-align:right;color:#10284a"><span style="display:inline-block;transform:scaleX(0.85);transform-origin:100% 50%">0,000</span></div>
<div class="c" style="top:270px;left:1769px;color:#10284a"><span style="display:inline-block;transform:scaleX(0.85);transform-origin:0 50%">01-FAB</span></div>
<div class="c" style="top:270px;left:1860px;color:#10284a"><span style="display:inline-block;transform:scaleX(0.85);transform-origin:0 50%">01-FAB</span></div>
<div class="a" style="left:344px;top:289px;width:1574px;height:20px;background:#efefef"></div>
<div class="c" style="top:290px;left:344px;width:90px;text-align:center;color:#000"><span style="display:inline-block;transform:scaleX(0.91);transform-origin:50% 50%">18/08/2023</span></div>
<div class="c" style="top:290px;left:435px;width:80px;text-align:center;color:#000"><span style="display:inline-block;transform:scaleX(0.85);transform-origin:50% 50%">11:35:23</span></div>
<div class="c" style="top:290px;left:519px;color:#000"><span style="display:inline-block;transform:scaleX(0.85);transform-origin:0 50%">P23370001</span></div>
<div class="c" style="top:290px;left:600px;color:#000"><span style="display:inline-block;transform:scaleX(0.85);transform-origin:0 50%">P23370001003</span></div>
<div class="c" style="top:290px;left:711px;color:#000"><span style="display:inline-block;transform:scaleX(0.85);transform-origin:0 50%">C230800002/01</span></div>
<div class="c" style="top:290px;left:823px;color:#000"><span style="display:inline-block;transform:scaleX(0.85);transform-origin:0 50%">SO</span></div>
<div class="c" style="top:290px;left:901px;width:68px;text-align:right;color:#000"><span style="display:inline-block;transform:scaleX(0.85);transform-origin:100% 50%">1,000</span></div>
<div class="c" style="top:290px;left:1179px;color:#000"><span style="display:inline-block;transform:scaleX(0.85);transform-origin:0 50%">isia</span></div>
<div class="c" style="top:290px;left:1220px;color:#000"><span style="display:inline-block;transform:scaleX(0.85);transform-origin:0 50%">U1</span></div>
<div class="c" style="top:290px;left:1282px;color:#000"><span style="display:inline-block;transform:scaleX(0.85);transform-origin:0 50%">Menuiserie</span></div>
<div class="c" style="top:290px;left:1413px;color:#000"><span style="display:inline-block;transform:scaleX(0.85);transform-origin:0 50%">C230800002</span></div>
<div class="c" style="top:290px;left:1504px;color:#000"><span style="display:inline-block;transform:scaleX(0.85);transform-origin:0 50%">01</span></div>
<div class="c" style="top:290px;left:1666px;color:#000"><span style="display:inline-block;transform:scaleX(0.85);transform-origin:0 50%">PVC</span></div>
<div class="c" style="top:290px;left:1715px;width:47px;text-align:right;color:#000"><span style="display:inline-block;transform:scaleX(0.85);transform-origin:100% 50%">0,000</span></div>
<div class="c" style="top:290px;left:1769px;color:#000"><span style="display:inline-block;transform:scaleX(0.85);transform-origin:0 50%">01-FAB</span></div>
<div class="c" style="top:290px;left:1860px;color:#000"><span style="display:inline-block;transform:scaleX(0.85);transform-origin:0 50%">01-FAB</span></div>
<div class="a" style="left:344px;top:309px;width:1574px;height:20px;background:#ffffff"></div>
<div class="c" style="top:310px;left:344px;width:90px;text-align:center;color:#000"><span style="display:inline-block;transform:scaleX(0.91);transform-origin:50% 50%">18/08/2023</span></div>
<div class="c" style="top:310px;left:435px;width:80px;text-align:center;color:#000"><span style="display:inline-block;transform:scaleX(0.85);transform-origin:50% 50%">11:35:23</span></div>
<div class="c" style="top:310px;left:519px;color:#000"><span style="display:inline-block;transform:scaleX(0.85);transform-origin:0 50%">P23370001</span></div>
<div class="c" style="top:310px;left:600px;color:#000"><span style="display:inline-block;transform:scaleX(0.85);transform-origin:0 50%">P23370001004</span></div>
<div class="c" style="top:310px;left:711px;color:#000"><span style="display:inline-block;transform:scaleX(0.85);transform-origin:0 50%">C230800002/01</span></div>
<div class="c" style="top:310px;left:823px;color:#000"><span style="display:inline-block;transform:scaleX(0.85);transform-origin:0 50%">SO</span></div>
<div class="c" style="top:310px;left:901px;width:68px;text-align:right;color:#000"><span style="display:inline-block;transform:scaleX(0.85);transform-origin:100% 50%">1,000</span></div>
<div class="c" style="top:310px;left:1179px;color:#000"><span style="display:inline-block;transform:scaleX(0.85);transform-origin:0 50%">isia</span></div>
<div class="c" style="top:310px;left:1220px;color:#000"><span style="display:inline-block;transform:scaleX(0.85);transform-origin:0 50%">U1</span></div>
<div class="c" style="top:310px;left:1282px;color:#000"><span style="display:inline-block;transform:scaleX(0.85);transform-origin:0 50%">Menuiserie</span></div>
<div class="c" style="top:310px;left:1413px;color:#000"><span style="display:inline-block;transform:scaleX(0.85);transform-origin:0 50%">C230800002</span></div>
<div class="c" style="top:310px;left:1504px;color:#000"><span style="display:inline-block;transform:scaleX(0.85);transform-origin:0 50%">01</span></div>
<div class="c" style="top:310px;left:1666px;color:#000"><span style="display:inline-block;transform:scaleX(0.85);transform-origin:0 50%">PVC</span></div>
<div class="c" style="top:310px;left:1715px;width:47px;text-align:right;color:#000"><span style="display:inline-block;transform:scaleX(0.85);transform-origin:100% 50%">0,000</span></div>
<div class="c" style="top:310px;left:1769px;color:#000"><span style="display:inline-block;transform:scaleX(0.85);transform-origin:0 50%">01-FAB</span></div>
<div class="c" style="top:310px;left:1860px;color:#000"><span style="display:inline-block;transform:scaleX(0.85);transform-origin:0 50%">01-FAB</span></div>
<div class="a" style="left:344px;top:329px;width:1574px;height:20px;background:#efefef"></div>
<div class="c" style="top:330px;left:344px;width:90px;text-align:center;color:#000"><span style="display:inline-block;transform:scaleX(0.91);transform-origin:50% 50%">07/08/2023</span></div>
<div class="c" style="top:330px;left:435px;width:80px;text-align:center;color:#000"><span style="display:inline-block;transform:scaleX(0.85);transform-origin:50% 50%">17:41:39</span></div>
<div class="c" style="top:330px;left:519px;color:#000"><span style="display:inline-block;transform:scaleX(0.85);transform-origin:0 50%">P23370001</span></div>
<div class="c" style="top:330px;left:600px;color:#000"><span style="display:inline-block;transform:scaleX(0.85);transform-origin:0 50%">P23370001001</span></div>
<div class="c" style="top:330px;left:711px;color:#000"><span style="display:inline-block;transform:scaleX(0.85);transform-origin:0 50%">C230800002/02</span></div>
<div class="c" style="top:330px;left:823px;color:#000"><span style="display:inline-block;transform:scaleX(0.85);transform-origin:0 50%">D</span></div>
<div class="c" style="top:330px;left:901px;width:68px;text-align:right;color:#000"><span style="display:inline-block;transform:scaleX(0.85);transform-origin:100% 50%">1,000</span></div>
<div class="c" style="top:330px;left:1179px;color:#000"><span style="display:inline-block;transform:scaleX(0.85);transform-origin:0 50%">isia</span></div>
<div class="c" style="top:330px;left:1220px;color:#000"><span style="display:inline-block;transform:scaleX(0.85);transform-origin:0 50%">U1</span></div>
<div class="c" style="top:330px;left:1282px;color:#000"><span style="display:inline-block;transform:scaleX(0.85);transform-origin:0 50%">Menuiserie</span></div>
<div class="c" style="top:330px;left:1413px;color:#000"><span style="display:inline-block;transform:scaleX(0.85);transform-origin:0 50%">C230800002</span></div>
<div class="c" style="top:330px;left:1504px;color:#000"><span style="display:inline-block;transform:scaleX(0.85);transform-origin:0 50%">02</span></div>
<div class="c" style="top:330px;left:1666px;color:#000"><span style="display:inline-block;transform:scaleX(0.85);transform-origin:0 50%">PVC</span></div>
<div class="c" style="top:330px;left:1715px;width:47px;text-align:right;color:#000"><span style="display:inline-block;transform:scaleX(0.85);transform-origin:100% 50%">0,000</span></div>
<div class="c" style="top:330px;left:1769px;color:#000"><span style="display:inline-block;transform:scaleX(0.85);transform-origin:0 50%">01-FAB</span></div>
<div class="c" style="top:330px;left:1860px;color:#000"><span style="display:inline-block;transform:scaleX(0.85);transform-origin:0 50%">01-FAB</span></div>
<div class="a" style="left:344px;top:349px;width:1574px;height:20px;background:#ffffff"></div>
<div class="c" style="top:350px;left:344px;width:90px;text-align:center;color:#000"><span style="display:inline-block;transform:scaleX(0.91);transform-origin:50% 50%">07/08/2023</span></div>
<div class="c" style="top:350px;left:435px;width:80px;text-align:center;color:#000"><span style="display:inline-block;transform:scaleX(0.85);transform-origin:50% 50%">17:39:22</span></div>
<div class="c" style="top:350px;left:519px;color:#000"><span style="display:inline-block;transform:scaleX(0.85);transform-origin:0 50%">P23370001</span></div>
<div class="c" style="top:350px;left:600px;color:#000"><span style="display:inline-block;transform:scaleX(0.85);transform-origin:0 50%">P23370001001</span></div>
<div class="c" style="top:350px;left:711px;color:#000"><span style="display:inline-block;transform:scaleX(0.85);transform-origin:0 50%">C230800002/02</span></div>
<div class="c" style="top:350px;left:823px;color:#000"><span style="display:inline-block;transform:scaleX(0.85);transform-origin:0 50%">D</span></div>
<div class="c" style="top:350px;left:901px;width:68px;text-align:right;color:#000"><span style="display:inline-block;transform:scaleX(0.85);transform-origin:100% 50%">-1,000</span></div>
<div class="c" style="top:350px;left:1179px;color:#000"><span style="display:inline-block;transform:scaleX(0.85);transform-origin:0 50%">isia</span></div>
<div class="c" style="top:350px;left:1220px;color:#000"><span style="display:inline-block;transform:scaleX(0.85);transform-origin:0 50%">U1</span></div>
<div class="c" style="top:350px;left:1282px;color:#000"><span style="display:inline-block;transform:scaleX(0.85);transform-origin:0 50%">Menuiserie</span></div>
<div class="c" style="top:350px;left:1413px;color:#000"><span style="display:inline-block;transform:scaleX(0.85);transform-origin:0 50%">C230800002</span></div>
<div class="c" style="top:350px;left:1504px;color:#000"><span style="display:inline-block;transform:scaleX(0.85);transform-origin:0 50%">02</span></div>
<div class="c" style="top:350px;left:1666px;color:#000"><span style="display:inline-block;transform:scaleX(0.85);transform-origin:0 50%">PVC</span></div>
<div class="c" style="top:350px;left:1715px;width:47px;text-align:right;color:#000"><span style="display:inline-block;transform:scaleX(0.85);transform-origin:100% 50%">1,000</span></div>
<div class="c" style="top:350px;left:1769px;color:#000"><span style="display:inline-block;transform:scaleX(0.85);transform-origin:0 50%">01-FAB</span></div>
<div class="c" style="top:350px;left:1860px;color:#000"><span style="display:inline-block;transform:scaleX(0.85);transform-origin:0 50%">01-FAB</span></div>
<div class="a" style="left:344px;top:369px;width:1574px;height:20px;background:#efefef"></div>
<div class="c" style="top:370px;left:344px;width:90px;text-align:center;color:#000"><span style="display:inline-block;transform:scaleX(0.91);transform-origin:50% 50%">07/08/2023</span></div>
<div class="c" style="top:370px;left:435px;width:80px;text-align:center;color:#000"><span style="display:inline-block;transform:scaleX(0.85);transform-origin:50% 50%">17:39:22</span></div>
<div class="c" style="top:370px;left:519px;color:#000"><span style="display:inline-block;transform:scaleX(0.85);transform-origin:0 50%">P23370001</span></div>
<div class="c" style="top:370px;left:600px;color:#000"><span style="display:inline-block;transform:scaleX(0.85);transform-origin:0 50%">P23370001001</span></div>
<div class="c" style="top:370px;left:711px;color:#000"><span style="display:inline-block;transform:scaleX(0.85);transform-origin:0 50%">C230800002/02</span></div>
<div class="c" style="top:370px;left:823px;color:#000"><span style="display:inline-block;transform:scaleX(0.85);transform-origin:0 50%">D</span></div>
<div class="c" style="top:370px;left:901px;width:68px;text-align:right;color:#000"><span style="display:inline-block;transform:scaleX(0.85);transform-origin:100% 50%">1,000</span></div>
<div class="c" style="top:370px;left:1179px;color:#000"><span style="display:inline-block;transform:scaleX(0.85);transform-origin:0 50%">isia</span></div>
<div class="c" style="top:370px;left:1220px;color:#000"><span style="display:inline-block;transform:scaleX(0.85);transform-origin:0 50%">U1</span></div>
<div class="c" style="top:370px;left:1282px;color:#000"><span style="display:inline-block;transform:scaleX(0.85);transform-origin:0 50%">Menuiserie</span></div>
<div class="c" style="top:370px;left:1413px;color:#000"><span style="display:inline-block;transform:scaleX(0.85);transform-origin:0 50%">C230800002</span></div>
<div class="c" style="top:370px;left:1504px;color:#000"><span style="display:inline-block;transform:scaleX(0.85);transform-origin:0 50%">02</span></div>
<div class="c" style="top:370px;left:1666px;color:#000"><span style="display:inline-block;transform:scaleX(0.85);transform-origin:0 50%">PVC</span></div>
<div class="c" style="top:370px;left:1715px;width:47px;text-align:right;color:#000"><span style="display:inline-block;transform:scaleX(0.85);transform-origin:100% 50%">0,000</span></div>
<div class="c" style="top:370px;left:1769px;color:#000"><span style="display:inline-block;transform:scaleX(0.85);transform-origin:0 50%">01-FAB</span></div>
<div class="c" style="top:370px;left:1860px;color:#000"><span style="display:inline-block;transform:scaleX(0.85);transform-origin:0 50%">01-FAB</span></div>
<div class="a" style="left:344px;top:389px;width:1574px;height:20px;background:#ffffff"></div>
<div class="c" style="top:390px;left:344px;width:90px;text-align:center;color:#000"><span style="display:inline-block;transform:scaleX(0.91);transform-origin:50% 50%">07/08/2023</span></div>
<div class="c" style="top:390px;left:435px;width:80px;text-align:center;color:#000"><span style="display:inline-block;transform:scaleX(0.85);transform-origin:50% 50%">17:38:00</span></div>
<div class="c" style="top:390px;left:519px;color:#000"><span style="display:inline-block;transform:scaleX(0.85);transform-origin:0 50%">P23370001</span></div>
<div class="c" style="top:390px;left:600px;color:#000"><span style="display:inline-block;transform:scaleX(0.85);transform-origin:0 50%">P23370001001</span></div>
<div class="c" style="top:390px;left:711px;color:#000"><span style="display:inline-block;transform:scaleX(0.85);transform-origin:0 50%">C230800002/02</span></div>
<div class="c" style="top:390px;left:823px;color:#000"><span style="display:inline-block;transform:scaleX(0.85);transform-origin:0 50%">D</span></div>
<div class="c" style="top:390px;left:901px;width:68px;text-align:right;color:#000"><span style="display:inline-block;transform:scaleX(0.85);transform-origin:100% 50%">-1,000</span></div>
<div class="c" style="top:390px;left:1179px;color:#000"><span style="display:inline-block;transform:scaleX(0.85);transform-origin:0 50%">isia</span></div>
<div class="c" style="top:390px;left:1220px;color:#000"><span style="display:inline-block;transform:scaleX(0.85);transform-origin:0 50%">U1</span></div>
<div class="c" style="top:390px;left:1282px;color:#000"><span style="display:inline-block;transform:scaleX(0.85);transform-origin:0 50%">Menuiserie</span></div>
<div class="c" style="top:390px;left:1413px;color:#000"><span style="display:inline-block;transform:scaleX(0.85);transform-origin:0 50%">C230800002</span></div>
<div class="c" style="top:390px;left:1504px;color:#000"><span style="display:inline-block;transform:scaleX(0.85);transform-origin:0 50%">02</span></div>
<div class="c" style="top:390px;left:1666px;color:#000"><span style="display:inline-block;transform:scaleX(0.85);transform-origin:0 50%">PVC</span></div>
<div class="c" style="top:390px;left:1715px;width:47px;text-align:right;color:#000"><span style="display:inline-block;transform:scaleX(0.85);transform-origin:100% 50%">1,000</span></div>
<div class="c" style="top:390px;left:1769px;color:#000"><span style="display:inline-block;transform:scaleX(0.85);transform-origin:0 50%">01-FAB</span></div>
<div class="c" style="top:390px;left:1860px;color:#000"><span style="display:inline-block;transform:scaleX(0.85);transform-origin:0 50%">01-FAB</span></div>
<div class="a" style="left:344px;top:409px;width:1574px;height:20px;background:#efefef"></div>
<div class="c" style="top:410px;left:344px;width:90px;text-align:center;color:#000"><span style="display:inline-block;transform:scaleX(0.91);transform-origin:50% 50%">07/08/2023</span></div>
<div class="c" style="top:410px;left:435px;width:80px;text-align:center;color:#000"><span style="display:inline-block;transform:scaleX(0.85);transform-origin:50% 50%">17:38:00</span></div>
<div class="c" style="top:410px;left:519px;color:#000"><span style="display:inline-block;transform:scaleX(0.85);transform-origin:0 50%">P23370001</span></div>
<div class="c" style="top:410px;left:600px;color:#000"><span style="display:inline-block;transform:scaleX(0.85);transform-origin:0 50%">P23370001001</span></div>
<div class="c" style="top:410px;left:711px;color:#000"><span style="display:inline-block;transform:scaleX(0.85);transform-origin:0 50%">C230800002/02</span></div>
<div class="c" style="top:410px;left:823px;color:#000"><span style="display:inline-block;transform:scaleX(0.85);transform-origin:0 50%">D</span></div>
<div class="c" style="top:410px;left:901px;width:68px;text-align:right;color:#000"><span style="display:inline-block;transform:scaleX(0.85);transform-origin:100% 50%">1,000</span></div>
<div class="c" style="top:410px;left:1179px;color:#000"><span style="display:inline-block;transform:scaleX(0.85);transform-origin:0 50%">isia</span></div>
<div class="c" style="top:410px;left:1220px;color:#000"><span style="display:inline-block;transform:scaleX(0.85);transform-origin:0 50%">U1</span></div>
<div class="c" style="top:410px;left:1282px;color:#000"><span style="display:inline-block;transform:scaleX(0.85);transform-origin:0 50%">Menuiserie</span></div>
<div class="c" style="top:410px;left:1413px;color:#000"><span style="display:inline-block;transform:scaleX(0.85);transform-origin:0 50%">C230800002</span></div>
<div class="c" style="top:410px;left:1504px;color:#000"><span style="display:inline-block;transform:scaleX(0.85);transform-origin:0 50%">02</span></div>
<div class="c" style="top:410px;left:1666px;color:#000"><span style="display:inline-block;transform:scaleX(0.85);transform-origin:0 50%">PVC</span></div>
<div class="c" style="top:410px;left:1715px;width:47px;text-align:right;color:#000"><span style="display:inline-block;transform:scaleX(0.85);transform-origin:100% 50%">0,000</span></div>
<div class="c" style="top:410px;left:1769px;color:#000"><span style="display:inline-block;transform:scaleX(0.85);transform-origin:0 50%">01-FAB</span></div>
<div class="c" style="top:410px;left:1860px;color:#000"><span style="display:inline-block;transform:scaleX(0.85);transform-origin:0 50%">01-FAB</span></div>
<div class="a" style="left:344px;top:429px;width:1574px;height:20px;background:#ffffff"></div>
<div class="c" style="top:430px;left:344px;width:90px;text-align:center;color:#000"><span style="display:inline-block;transform:scaleX(0.91);transform-origin:50% 50%">07/08/2023</span></div>
<div class="c" style="top:430px;left:435px;width:80px;text-align:center;color:#000"><span style="display:inline-block;transform:scaleX(0.85);transform-origin:50% 50%">16:58:05</span></div>
<div class="c" style="top:430px;left:519px;color:#000"><span style="display:inline-block;transform:scaleX(0.85);transform-origin:0 50%">P23370001</span></div>
<div class="c" style="top:430px;left:600px;color:#000"><span style="display:inline-block;transform:scaleX(0.85);transform-origin:0 50%">P23370001001</span></div>
<div class="c" style="top:430px;left:711px;color:#000"><span style="display:inline-block;transform:scaleX(0.85);transform-origin:0 50%">C230800002/02</span></div>
<div class="c" style="top:430px;left:823px;color:#000"><span style="display:inline-block;transform:scaleX(0.85);transform-origin:0 50%">D</span></div>
<div class="c" style="top:430px;left:901px;width:68px;text-align:right;color:#000"><span style="display:inline-block;transform:scaleX(0.85);transform-origin:100% 50%">-1,000</span></div>
<div class="c" style="top:430px;left:1179px;color:#000"><span style="display:inline-block;transform:scaleX(0.85);transform-origin:0 50%">isia</span></div>
<div class="c" style="top:430px;left:1220px;color:#000"><span style="display:inline-block;transform:scaleX(0.85);transform-origin:0 50%">U1</span></div>
<div class="c" style="top:430px;left:1282px;color:#000"><span style="display:inline-block;transform:scaleX(0.85);transform-origin:0 50%">Menuiserie</span></div>
<div class="c" style="top:430px;left:1413px;color:#000"><span style="display:inline-block;transform:scaleX(0.85);transform-origin:0 50%">C230800002</span></div>
<div class="c" style="top:430px;left:1504px;color:#000"><span style="display:inline-block;transform:scaleX(0.85);transform-origin:0 50%">02</span></div>
<div class="c" style="top:430px;left:1666px;color:#000"><span style="display:inline-block;transform:scaleX(0.85);transform-origin:0 50%">PVC</span></div>
<div class="c" style="top:430px;left:1715px;width:47px;text-align:right;color:#000"><span style="display:inline-block;transform:scaleX(0.85);transform-origin:100% 50%">1,000</span></div>
<div class="c" style="top:430px;left:1769px;color:#000"><span style="display:inline-block;transform:scaleX(0.85);transform-origin:0 50%">01-FAB</span></div>
<div class="c" style="top:430px;left:1860px;color:#000"><span style="display:inline-block;transform:scaleX(0.85);transform-origin:0 50%">01-FAB</span></div>
<div class="a" style="left:344px;top:449px;width:1574px;height:20px;background:#efefef"></div>
<div class="c" style="top:450px;left:344px;width:90px;text-align:center;color:#000"><span style="display:inline-block;transform:scaleX(0.91);transform-origin:50% 50%">07/08/2023</span></div>
<div class="c" style="top:450px;left:435px;width:80px;text-align:center;color:#000"><span style="display:inline-block;transform:scaleX(0.85);transform-origin:50% 50%">16:58:05</span></div>
<div class="c" style="top:450px;left:519px;color:#000"><span style="display:inline-block;transform:scaleX(0.85);transform-origin:0 50%">P23370001</span></div>
<div class="c" style="top:450px;left:600px;color:#000"><span style="display:inline-block;transform:scaleX(0.85);transform-origin:0 50%">P23370001001</span></div>
<div class="c" style="top:450px;left:711px;color:#000"><span style="display:inline-block;transform:scaleX(0.85);transform-origin:0 50%">C230800002/02</span></div>
<div class="c" style="top:450px;left:823px;color:#000"><span style="display:inline-block;transform:scaleX(0.85);transform-origin:0 50%">D</span></div>
<div class="c" style="top:450px;left:901px;width:68px;text-align:right;color:#000"><span style="display:inline-block;transform:scaleX(0.85);transform-origin:100% 50%">1,000</span></div>
<div class="c" style="top:450px;left:1179px;color:#000"><span style="display:inline-block;transform:scaleX(0.85);transform-origin:0 50%">isia</span></div>
<div class="c" style="top:450px;left:1220px;color:#000"><span style="display:inline-block;transform:scaleX(0.85);transform-origin:0 50%">U1</span></div>
<div class="c" style="top:450px;left:1282px;color:#000"><span style="display:inline-block;transform:scaleX(0.85);transform-origin:0 50%">Menuiserie</span></div>
<div class="c" style="top:450px;left:1413px;color:#000"><span style="display:inline-block;transform:scaleX(0.85);transform-origin:0 50%">C230800002</span></div>
<div class="c" style="top:450px;left:1504px;color:#000"><span style="display:inline-block;transform:scaleX(0.85);transform-origin:0 50%">02</span></div>
<div class="c" style="top:450px;left:1666px;color:#000"><span style="display:inline-block;transform:scaleX(0.85);transform-origin:0 50%">PVC</span></div>
<div class="c" style="top:450px;left:1715px;width:47px;text-align:right;color:#000"><span style="display:inline-block;transform:scaleX(0.85);transform-origin:100% 50%">0,000</span></div>
<div class="c" style="top:450px;left:1769px;color:#000"><span style="display:inline-block;transform:scaleX(0.85);transform-origin:0 50%">01-FAB</span></div>
<div class="c" style="top:450px;left:1860px;color:#000"><span style="display:inline-block;transform:scaleX(0.85);transform-origin:0 50%">01-FAB</span></div>
<div class="a" style="left:344px;top:469px;width:1574px;height:20px;background:#ffffff"></div>
<div class="c" style="top:470px;left:344px;width:90px;text-align:center;color:#000"><span style="display:inline-block;transform:scaleX(0.91);transform-origin:50% 50%">07/08/2023</span></div>
<div class="c" style="top:470px;left:435px;width:80px;text-align:center;color:#000"><span style="display:inline-block;transform:scaleX(0.85);transform-origin:50% 50%">16:39:36</span></div>
<div class="c" style="top:470px;left:519px;color:#000"><span style="display:inline-block;transform:scaleX(0.85);transform-origin:0 50%">P23370001</span></div>
<div class="c" style="top:470px;left:600px;color:#000"><span style="display:inline-block;transform:scaleX(0.85);transform-origin:0 50%">P23370001001</span></div>
<div class="c" style="top:470px;left:711px;color:#000"><span style="display:inline-block;transform:scaleX(0.85);transform-origin:0 50%">C230800002/02</span></div>
<div class="c" style="top:470px;left:823px;color:#000"><span style="display:inline-block;transform:scaleX(0.85);transform-origin:0 50%">D</span></div>
<div class="c" style="top:470px;left:901px;width:68px;text-align:right;color:#000"><span style="display:inline-block;transform:scaleX(0.85);transform-origin:100% 50%">-1,000</span></div>
<div class="c" style="top:470px;left:1179px;color:#000"><span style="display:inline-block;transform:scaleX(0.85);transform-origin:0 50%">isia</span></div>
<div class="c" style="top:470px;left:1220px;color:#000"><span style="display:inline-block;transform:scaleX(0.85);transform-origin:0 50%">U1</span></div>
<div class="c" style="top:470px;left:1282px;color:#000"><span style="display:inline-block;transform:scaleX(0.85);transform-origin:0 50%">Menuiserie</span></div>
<div class="c" style="top:470px;left:1413px;color:#000"><span style="display:inline-block;transform:scaleX(0.85);transform-origin:0 50%">C230800002</span></div>
<div class="c" style="top:470px;left:1504px;color:#000"><span style="display:inline-block;transform:scaleX(0.85);transform-origin:0 50%">02</span></div>
<div class="c" style="top:470px;left:1666px;color:#000"><span style="display:inline-block;transform:scaleX(0.85);transform-origin:0 50%">PVC</span></div>
<div class="c" style="top:470px;left:1715px;width:47px;text-align:right;color:#000"><span style="display:inline-block;transform:scaleX(0.85);transform-origin:100% 50%">1,000</span></div>
<div class="c" style="top:470px;left:1769px;color:#000"><span style="display:inline-block;transform:scaleX(0.85);transform-origin:0 50%">01-FAB</span></div>
<div class="c" style="top:470px;left:1860px;color:#000"><span style="display:inline-block;transform:scaleX(0.85);transform-origin:0 50%">01-FAB</span></div>
<div class="a" style="left:344px;top:489px;width:1574px;height:20px;background:#efefef"></div>
<div class="c" style="top:490px;left:344px;width:90px;text-align:center;color:#000"><span style="display:inline-block;transform:scaleX(0.91);transform-origin:50% 50%">07/08/2023</span></div>
<div class="c" style="top:490px;left:435px;width:80px;text-align:center;color:#000"><span style="display:inline-block;transform:scaleX(0.85);transform-origin:50% 50%">16:39:36</span></div>
<div class="c" style="top:490px;left:519px;color:#000"><span style="display:inline-block;transform:scaleX(0.85);transform-origin:0 50%">P23370001</span></div>
<div class="c" style="top:490px;left:600px;color:#000"><span style="display:inline-block;transform:scaleX(0.85);transform-origin:0 50%">P23370001001</span></div>
<div class="c" style="top:490px;left:711px;color:#000"><span style="display:inline-block;transform:scaleX(0.85);transform-origin:0 50%">C230800002/02</span></div>
<div class="c" style="top:490px;left:823px;color:#000"><span style="display:inline-block;transform:scaleX(0.85);transform-origin:0 50%">D</span></div>
<div class="c" style="top:490px;left:901px;width:68px;text-align:right;color:#000"><span style="display:inline-block;transform:scaleX(0.85);transform-origin:100% 50%">1,000</span></div>
<div class="c" style="top:490px;left:1179px;color:#000"><span style="display:inline-block;transform:scaleX(0.85);transform-origin:0 50%">isia</span></div>
<div class="c" style="top:490px;left:1220px;color:#000"><span style="display:inline-block;transform:scaleX(0.85);transform-origin:0 50%">U1</span></div>
<div class="c" style="top:490px;left:1282px;color:#000"><span style="display:inline-block;transform:scaleX(0.85);transform-origin:0 50%">Menuiserie</span></div>
<div class="c" style="top:490px;left:1413px;color:#000"><span style="display:inline-block;transform:scaleX(0.85);transform-origin:0 50%">C230800002</span></div>
<div class="c" style="top:490px;left:1504px;color:#000"><span style="display:inline-block;transform:scaleX(0.85);transform-origin:0 50%">02</span></div>
<div class="c" style="top:490px;left:1666px;color:#000"><span style="display:inline-block;transform:scaleX(0.85);transform-origin:0 50%">PVC</span></div>
<div class="c" style="top:490px;left:1715px;width:47px;text-align:right;color:#000"><span style="display:inline-block;transform:scaleX(0.85);transform-origin:100% 50%">0,000</span></div>
<div class="c" style="top:490px;left:1769px;color:#000"><span style="display:inline-block;transform:scaleX(0.85);transform-origin:0 50%">01-FAB</span></div>
<div class="c" style="top:490px;left:1860px;color:#000"><span style="display:inline-block;transform:scaleX(0.85);transform-origin:0 50%">01-FAB</span></div>
<div class="a" style="left:344px;top:509px;width:1574px;height:20px;background:#ffffff"></div>
<div class="c" style="top:510px;left:344px;width:90px;text-align:center;color:#000"><span style="display:inline-block;transform:scaleX(0.91);transform-origin:50% 50%">07/08/2023</span></div>
<div class="c" style="top:510px;left:435px;width:80px;text-align:center;color:#000"><span style="display:inline-block;transform:scaleX(0.85);transform-origin:50% 50%">16:37:07</span></div>
<div class="c" style="top:510px;left:519px;color:#000"><span style="display:inline-block;transform:scaleX(0.85);transform-origin:0 50%">P23370001</span></div>
<div class="c" style="top:510px;left:600px;color:#000"><span style="display:inline-block;transform:scaleX(0.85);transform-origin:0 50%">P23370001001</span></div>
<div class="c" style="top:510px;left:711px;color:#000"><span style="display:inline-block;transform:scaleX(0.85);transform-origin:0 50%">C230800002/02</span></div>
<div class="c" style="top:510px;left:823px;color:#000"><span style="display:inline-block;transform:scaleX(0.85);transform-origin:0 50%">D</span></div>
<div class="c" style="top:510px;left:901px;width:68px;text-align:right;color:#000"><span style="display:inline-block;transform:scaleX(0.85);transform-origin:100% 50%">-1,000</span></div>
<div class="c" style="top:510px;left:1179px;color:#000"><span style="display:inline-block;transform:scaleX(0.85);transform-origin:0 50%">isia</span></div>
<div class="c" style="top:510px;left:1220px;color:#000"><span style="display:inline-block;transform:scaleX(0.85);transform-origin:0 50%">U1</span></div>
<div class="c" style="top:510px;left:1282px;color:#000"><span style="display:inline-block;transform:scaleX(0.85);transform-origin:0 50%">Menuiserie</span></div>
<div class="c" style="top:510px;left:1413px;color:#000"><span style="display:inline-block;transform:scaleX(0.85);transform-origin:0 50%">C230800002</span></div>
<div class="c" style="top:510px;left:1504px;color:#000"><span style="display:inline-block;transform:scaleX(0.85);transform-origin:0 50%">02</span></div>
<div class="c" style="top:510px;left:1666px;color:#000"><span style="display:inline-block;transform:scaleX(0.85);transform-origin:0 50%">PVC</span></div>
<div class="c" style="top:510px;left:1715px;width:47px;text-align:right;color:#000"><span style="display:inline-block;transform:scaleX(0.85);transform-origin:100% 50%">1,000</span></div>
<div class="c" style="top:510px;left:1769px;color:#000"><span style="display:inline-block;transform:scaleX(0.85);transform-origin:0 50%">01-FAB</span></div>
<div class="c" style="top:510px;left:1860px;color:#000"><span style="display:inline-block;transform:scaleX(0.85);transform-origin:0 50%">01-FAB</span></div>
<div class="a" style="left:344px;top:529px;width:1574px;height:20px;background:#efefef"></div>
<div class="c" style="top:530px;left:344px;width:90px;text-align:center;color:#000"><span style="display:inline-block;transform:scaleX(0.91);transform-origin:50% 50%">07/08/2023</span></div>
<div class="c" style="top:530px;left:435px;width:80px;text-align:center;color:#000"><span style="display:inline-block;transform:scaleX(0.85);transform-origin:50% 50%">16:37:07</span></div>
<div class="c" style="top:530px;left:519px;color:#000"><span style="display:inline-block;transform:scaleX(0.85);transform-origin:0 50%">P23370001</span></div>
<div class="c" style="top:530px;left:600px;color:#000"><span style="display:inline-block;transform:scaleX(0.85);transform-origin:0 50%">P23370001001</span></div>
<div class="c" style="top:530px;left:711px;color:#000"><span style="display:inline-block;transform:scaleX(0.85);transform-origin:0 50%">C230800002/02</span></div>
<div class="c" style="top:530px;left:823px;color:#000"><span style="display:inline-block;transform:scaleX(0.85);transform-origin:0 50%">D</span></div>
<div class="c" style="top:530px;left:901px;width:68px;text-align:right;color:#000"><span style="display:inline-block;transform:scaleX(0.85);transform-origin:100% 50%">1,000</span></div>
<div class="c" style="top:530px;left:1179px;color:#000"><span style="display:inline-block;transform:scaleX(0.85);transform-origin:0 50%">isia</span></div>
<div class="c" style="top:530px;left:1220px;color:#000"><span style="display:inline-block;transform:scaleX(0.85);transform-origin:0 50%">U1</span></div>
<div class="c" style="top:530px;left:1282px;color:#000"><span style="display:inline-block;transform:scaleX(0.85);transform-origin:0 50%">Menuiserie</span></div>
<div class="c" style="top:530px;left:1413px;color:#000"><span style="display:inline-block;transform:scaleX(0.85);transform-origin:0 50%">C230800002</span></div>
<div class="c" style="top:530px;left:1504px;color:#000"><span style="display:inline-block;transform:scaleX(0.85);transform-origin:0 50%">02</span></div>
<div class="c" style="top:530px;left:1666px;color:#000"><span style="display:inline-block;transform:scaleX(0.85);transform-origin:0 50%">PVC</span></div>
<div class="c" style="top:530px;left:1715px;width:47px;text-align:right;color:#000"><span style="display:inline-block;transform:scaleX(0.85);transform-origin:100% 50%">0,000</span></div>
<div class="c" style="top:530px;left:1769px;color:#000"><span style="display:inline-block;transform:scaleX(0.85);transform-origin:0 50%">01-FAB</span></div>
<div class="c" style="top:530px;left:1860px;color:#000"><span style="display:inline-block;transform:scaleX(0.85);transform-origin:0 50%">01-FAB</span></div>
<svg class="a" style="left:343px;top:269px" width="1577" height="281" viewBox="343 269 1577 281"><path d="M344,269.5 H1918" stroke="#5a4a3a" stroke-width="1" stroke-dasharray="1,1"/><path d="M344,288.5 H1918" stroke="#5a4a3a" stroke-width="1" stroke-dasharray="1,1"/><path d="M344,308.5 H1918" stroke="#c9c9c9" stroke-width="1" stroke-dasharray="1,1"/><path d="M344,328.5 H1918" stroke="#c9c9c9" stroke-width="1" stroke-dasharray="1,1"/><path d="M344,348.5 H1918" stroke="#c9c9c9" stroke-width="1" stroke-dasharray="1,1"/><path d="M344,368.5 H1918" stroke="#c9c9c9" stroke-width="1" stroke-dasharray="1,1"/><path d="M344,388.5 H1918" stroke="#c9c9c9" stroke-width="1" stroke-dasharray="1,1"/><path d="M344,408.5 H1918" stroke="#c9c9c9" stroke-width="1" stroke-dasharray="1,1"/><path d="M344,428.5 H1918" stroke="#c9c9c9" stroke-width="1" stroke-dasharray="1,1"/><path d="M344,448.5 H1918" stroke="#c9c9c9" stroke-width="1" stroke-dasharray="1,1"/><path d="M344,468.5 H1918" stroke="#c9c9c9" stroke-width="1" stroke-dasharray="1,1"/><path d="M344,488.5 H1918" stroke="#c9c9c9" stroke-width="1" stroke-dasharray="1,1"/><path d="M344,508.5 H1918" stroke="#c9c9c9" stroke-width="1" stroke-dasharray="1,1"/><path d="M344,528.5 H1918" stroke="#c9c9c9" stroke-width="1" stroke-dasharray="1,1"/><path d="M344,548.5 H1918" stroke="#c9c9c9" stroke-width="1" stroke-dasharray="1,1"/><path d="M434.5,270 V288" stroke="#f4f8fc" stroke-width="1" stroke-dasharray="1,1"/><path d="M434.5,289 V548" stroke="#cfcfcf" stroke-width="1" stroke-dasharray="1,1"/><path d="M515.5,270 V288" stroke="#f4f8fc" stroke-width="1" stroke-dasharray="1,1"/><path d="M515.5,289 V548" stroke="#cfcfcf" stroke-width="1" stroke-dasharray="1,1"/><path d="M596.5,270 V288" stroke="#f4f8fc" stroke-width="1" stroke-dasharray="1,1"/><path d="M596.5,289 V548" stroke="#cfcfcf" stroke-width="1" stroke-dasharray="1,1"/><path d="M707.5,270 V288" stroke="#f4f8fc" stroke-width="1" stroke-dasharray="1,1"/><path d="M707.5,289 V548" stroke="#cfcfcf" stroke-width="1" stroke-dasharray="1,1"/><path d="M819.5,270 V288" stroke="#f4f8fc" stroke-width="1" stroke-dasharray="1,1"/><path d="M819.5,289 V548" stroke="#cfcfcf" stroke-width="1" stroke-dasharray="1,1"/><path d="M900.5,270 V288" stroke="#f4f8fc" stroke-width="1" stroke-dasharray="1,1"/><path d="M900.5,289 V548" stroke="#cfcfcf" stroke-width="1" stroke-dasharray="1,1"/><path d="M972.5,270 V288" stroke="#f4f8fc" stroke-width="1" stroke-dasharray="1,1"/><path d="M972.5,289 V548" stroke="#cfcfcf" stroke-width="1" stroke-dasharray="1,1"/><path d="M1023.5,270 V288" stroke="#f4f8fc" stroke-width="1" stroke-dasharray="1,1"/><path d="M1023.5,289 V548" stroke="#cfcfcf" stroke-width="1" stroke-dasharray="1,1"/><path d="M1114.5,270 V288" stroke="#f4f8fc" stroke-width="1" stroke-dasharray="1,1"/><path d="M1114.5,289 V548" stroke="#cfcfcf" stroke-width="1" stroke-dasharray="1,1"/><path d="M1175.5,270 V288" stroke="#f4f8fc" stroke-width="1" stroke-dasharray="1,1"/><path d="M1175.5,289 V548" stroke="#cfcfcf" stroke-width="1" stroke-dasharray="1,1"/><path d="M1216.5,270 V288" stroke="#f4f8fc" stroke-width="1" stroke-dasharray="1,1"/><path d="M1216.5,289 V548" stroke="#cfcfcf" stroke-width="1" stroke-dasharray="1,1"/><path d="M1278.5,270 V288" stroke="#f4f8fc" stroke-width="1" stroke-dasharray="1,1"/><path d="M1278.5,289 V548" stroke="#cfcfcf" stroke-width="1" stroke-dasharray="1,1"/><path d="M1409.5,270 V288" stroke="#f4f8fc" stroke-width="1" stroke-dasharray="1,1"/><path d="M1409.5,289 V548" stroke="#cfcfcf" stroke-width="1" stroke-dasharray="1,1"/><path d="M1500.5,270 V288" stroke="#f4f8fc" stroke-width="1" stroke-dasharray="1,1"/><path d="M1500.5,289 V548" stroke="#cfcfcf" stroke-width="1" stroke-dasharray="1,1"/><path d="M1581.5,270 V288" stroke="#f4f8fc" stroke-width="1" stroke-dasharray="1,1"/><path d="M1581.5,289 V548" stroke="#cfcfcf" stroke-width="1" stroke-dasharray="1,1"/><path d="M1662.5,270 V288" stroke="#f4f8fc" stroke-width="1" stroke-dasharray="1,1"/><path d="M1662.5,289 V548" stroke="#cfcfcf" stroke-width="1" stroke-dasharray="1,1"/><path d="M1714.5,270 V288" stroke="#f4f8fc" stroke-width="1" stroke-dasharray="1,1"/><path d="M1714.5,289 V548" stroke="#cfcfcf" stroke-width="1" stroke-dasharray="1,1"/><path d="M1765.5,270 V288" stroke="#f4f8fc" stroke-width="1" stroke-dasharray="1,1"/><path d="M1765.5,289 V548" stroke="#cfcfcf" stroke-width="1" stroke-dasharray="1,1"/><path d="M1856.5,270 V288" stroke="#f4f8fc" stroke-width="1" stroke-dasharray="1,1"/><path d="M1856.5,289 V548" stroke="#cfcfcf" stroke-width="1" stroke-dasharray="1,1"/><path d="M344,548.5 H1918" stroke="#a0a0a0" stroke-width="1"/></svg>
<svg class="a" style="left:1075px;top:696px" width="20" height="34" viewBox="0 0 20 34"><path d="M2.5,2 V24.4 L6.9,19.8 L10.6,28.6 Q11.3,30.2 13,29.8 L15.2,29 Q16.5,28.4 16,27 L12.6,18.6 H18.9 Z" fill="#fff" stroke="#000" stroke-width="2" stroke-linejoin="miter"/></svg>
</body></html>
